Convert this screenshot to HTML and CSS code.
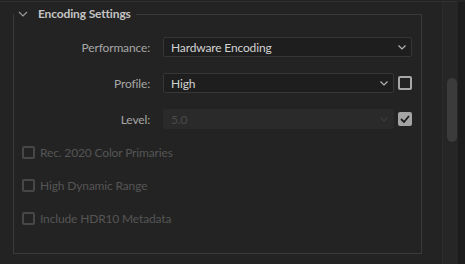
FILE: index.html
```html
<!DOCTYPE html>
<html lang="en">
<head>
    <meta charset="UTF-8" />
    <title>Encoding Settings</title>
    <link rel="stylesheet" href="styles.css">
</head>
<body>
    <div class="topline"></div>
    <div class="window">
        <div class="main">
            <fieldset class="group">
                <legend class="group-title">
                    <svg class="twisty" width="10" height="6" viewBox="0 0 10 6"><path d="M1 1l4 4 4-4" fill="none" stroke="#9a9a9a" stroke-width="1.2"/></svg>
                    Encoding Settings
                </legend>

                <div class="form">
                    <span class="label">Performance:</span>
                    <div class="select wide">
                        <span>Hardware Encoding</span>
                        <svg class="arrow" width="8" height="5" viewBox="0 0 8 5"><path d="M0.5 0.5l3.5 3.5 3.5-3.5" fill="none" stroke="currentColor" stroke-width="1.2"/></svg>
                    </div>

                    <span class="label">Profile:</span>
                    <div class="select">
                        <span>High</span>
                        <svg class="arrow" width="8" height="5" viewBox="0 0 8 5"><path d="M0.5 0.5l3.5 3.5 3.5-3.5" fill="none" stroke="currentColor" stroke-width="1.2"/></svg>
                    </div>
                    <span class="check"></span>

                    <span class="label">Level:</span>
                    <div class="select disabled">
                        <span>5.0</span>
                        <svg class="arrow" width="8" height="5" viewBox="0 0 8 5"><path d="M0.5 0.5l3.5 3.5 3.5-3.5" fill="none" stroke="currentColor" stroke-width="1.2"/></svg>
                    </div>
                    <span class="check on">
                        <svg width="10" height="8" viewBox="0 0 10 8"><path d="M1 4l3 3 5-6" fill="none" stroke="#1e1e1e" stroke-width="1.8"/></svg>
                    </span>
                </div>

                <!-- Opciones HDR desactivadas -->
                <div class="options">
                    <div class="option"><span class="check dim"></span>Rec. 2020 Color Primaries</div>
                    <div class="option"><span class="check dim"></span>High Dynamic Range</div>
                    <div class="option"><span class="check dim"></span>Include HDR10 Metadata</div>
                </div>
            </fieldset>
        </div>
        <div class="scrollbar">
            <div class="thumb"></div>
        </div>
        <div class="edge"></div>
    </div>
</body>
</html>
```

FILE: styles.css
```css
body {
    margin: 0;
    background-color: #232323;
    font-family: Lato, 'Noto Sans', sans-serif;
    font-size: 12px;
    letter-spacing: -0.15px;
    color: #a6a6a6;
    overflow: hidden;
}
.topline {
    margin-top: 1px;
    width: 457px;
    height: 1px;
    background-color: #303030;
}
.window {
    display: flex;
    height: 262px;
}
.main {
    width: 442px;
    padding-top: 4px;
    box-sizing: border-box;
}
.group {
    margin: 0 0 0 13px;
    padding: 0;
    width: 409px;
    box-sizing: border-box;
    border: 1px solid #3a3a3a;
}
.group-title {
    padding: 0 5px 0 4px;
    line-height: 16px;
    font-weight: bold;
    color: #c4c4c4;
    display: flex;
    align-items: center;
}
.twisty {
    margin-right: 10px;
}
.form {
    display: grid;
    grid-template-columns: 145px 231px 14px;
    grid-auto-rows: 20px;
    column-gap: 4px;
    row-gap: 16px;
    padding-top: 15px;
    align-items: center;
}
.label {
    text-align: right;
    padding-right: 9px;
}
.select {
    height: 20px;
    box-sizing: border-box;
    border: 1px solid #363636;
    border-radius: 2px;
    background-color: #1e1e1e;
    color: #d2d2d2;
    display: flex;
    align-items: center;
    justify-content: space-between;
    padding: 0 5px 0 7px;
}
.select .arrow {
    color: #b4b4b4;
}
.select.wide {
    grid-column: 2 / 4;
}
.select.disabled {
    background-color: #2a2a2a;
    border-color: #2a2a2a;
    color: #4a4a4a;
}
.select.disabled .arrow {
    color: #3c3c3c;
}
.check {
    width: 14px;
    height: 14px;
    box-sizing: border-box;
    border: 2px solid #a8a8a8;
    border-radius: 2px;
    display: flex;
    align-items: center;
    justify-content: center;
}
.check.on {
    background-color: #a4a4a4;
    border-color: #a4a4a4;
}
.check.dim {
    border-color: #474747;
    width: 13px;
    height: 13px;
}
.options {
    display: flex;
    flex-direction: column;
    gap: 13px;
    padding: 13px 0 25px 8px;
}
.option {
    height: 20px;
    display: flex;
    align-items: center;
    gap: 5px;
    color: #555555;
}
.scrollbar {
    width: 16px;
    box-sizing: border-box;
    border-left: 1px solid #2c2c2c;
    background-color: #262626;
    padding: 76px 1px 0 4px;
}
.thumb {
    width: 10px;
    height: 64px;
    border-radius: 5px;
    background-color: #3b3b3b;
}
.edge {
    flex: 1;
    background-color: #1c1c1c;
}
```
